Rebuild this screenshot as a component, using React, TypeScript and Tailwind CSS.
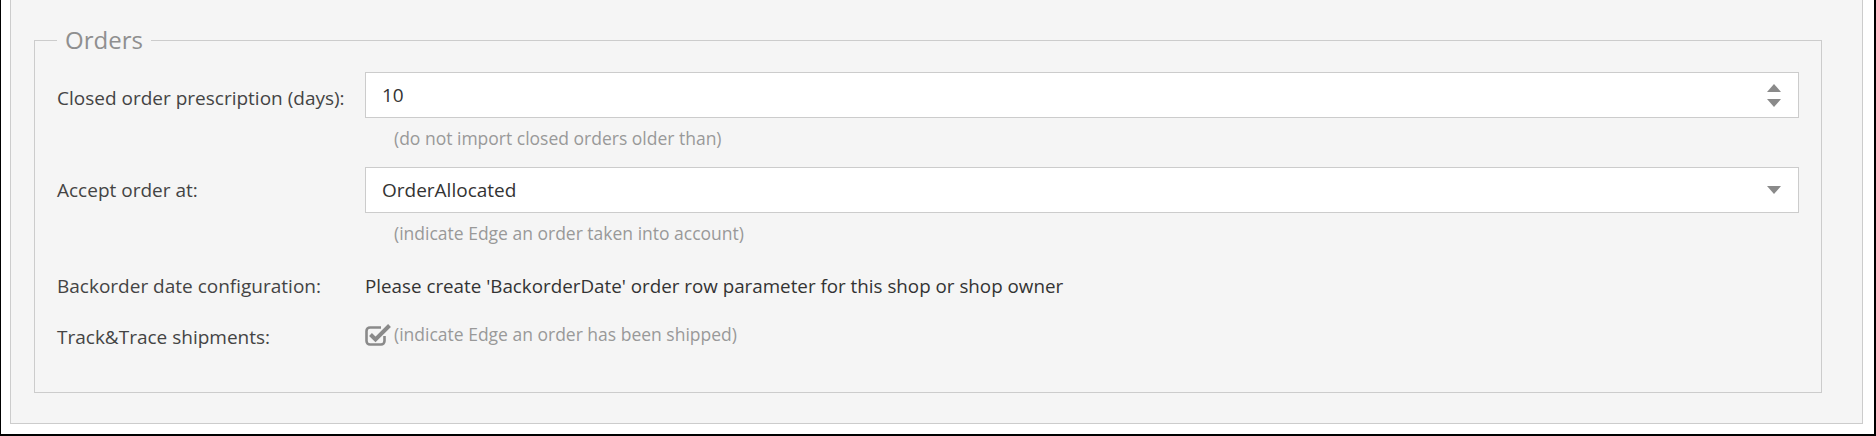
import React from "react";

function Caret({ up = false }: { up?: boolean }) {
  return (
    <svg width="14" height="8" viewBox="0 0 14 8" className="block">
      {up ? <polygon points="0,8 14,8 7,0" fill="#8a8a8a" /> : <polygon points="0,0 14,0 7,8" fill="#8a8a8a" />}
    </svg>
  );
}

function CheckIcon() {
  return (
    <svg width="27" height="24" viewBox="0 0 27 24" className="block shrink-0">
      <path
        d="M16 5.5 H5 A3.5 3.5 0 0 0 1.5 9 V19 A3.5 3.5 0 0 0 5 22.5 H16 A3.5 3.5 0 0 0 19.5 19 V14"
        fill="none"
        stroke="#8a8a8a"
        strokeWidth="2.6"
      />
      <path d="M5.5 12.5 L10.5 17.5 L24.5 3.5" fill="none" stroke="#8a8a8a" strokeWidth="4" strokeLinejoin="miter" />
    </svg>
  );
}

export default function App() {
  return (
    <div className="w-[1876px] h-[436px] bg-white border-l border-r-2 border-b-2 border-black pl-[9px] pr-[11px] pb-[10px] flex flex-col font-['Open_Sans',sans-serif]">
      <div className="flex-1 flex flex-col bg-[#f5f5f5] border-x border-b border-[#cccccc] pl-[23px] pr-[40px] pt-[22px] pb-[30px]">
        <fieldset className="flex-1 border border-[#cccccc] px-[22px] pt-[14px]">
          <legend className="px-2 text-[24px] leading-[36px] text-[#8f8f8f]">Orders</legend>

          <div className="grid grid-cols-[308px_1fr]">
            <div className="h-[46px] pt-[7px] flex items-center text-[19px] text-[#444444]">Closed order prescription (days):</div>
            <div>
              <div className="h-[46px] bg-white border border-[#cccccc] flex items-center pl-[16px] pr-[17px]">
                <span className="flex-1 text-[19px] text-[#333333]">10</span>
                <div className="flex flex-col gap-[7px]">
                  <Caret up />
                  <Caret />
                </div>
              </div>
              <div className="mt-[8px] pl-[29px] text-[17.5px] leading-[24px] text-[#999999]">(do not import closed orders older than)</div>
            </div>
          </div>

          <div className="grid grid-cols-[308px_1fr] mt-[17px]">
            <div className="h-[46px] flex items-center text-[19px] text-[#444444]">Accept order at:</div>
            <div>
              <div className="h-[46px] bg-white border border-[#cccccc] flex items-center pl-[16px] pr-[17px]">
                <span className="flex-1 text-[19px] text-[#333333]">OrderAllocated</span>
                <Caret />
              </div>
              <div className="mt-[8px] pl-[29px] text-[17.5px] leading-[24px] text-[#999999]">(indicate Edge an order taken into account)</div>
            </div>
          </div>

          <div className="grid grid-cols-[308px_1fr] mt-[29px] leading-[24px]">
            <div className="text-[19px] text-[#444444]">Backorder date configuration:</div>
            <div className="text-[18.8px] text-[#333333]">Please create 'BackorderDate' order row parameter for this shop or shop owner</div>
          </div>

          <div className="grid grid-cols-[308px_1fr] mt-[24px]">
            <div className="pt-[3px] text-[19px] leading-[24px] text-[#444444]">Track&amp;Trace shipments:</div>
            <div className="flex items-start">
              <CheckIcon />
              <span className="ml-[2px] text-[17.5px] leading-[24px] text-[#999999]">(indicate Edge an order has been shipped)</span>
            </div>
          </div>
        </fieldset>
      </div>
    </div>
  );
}
